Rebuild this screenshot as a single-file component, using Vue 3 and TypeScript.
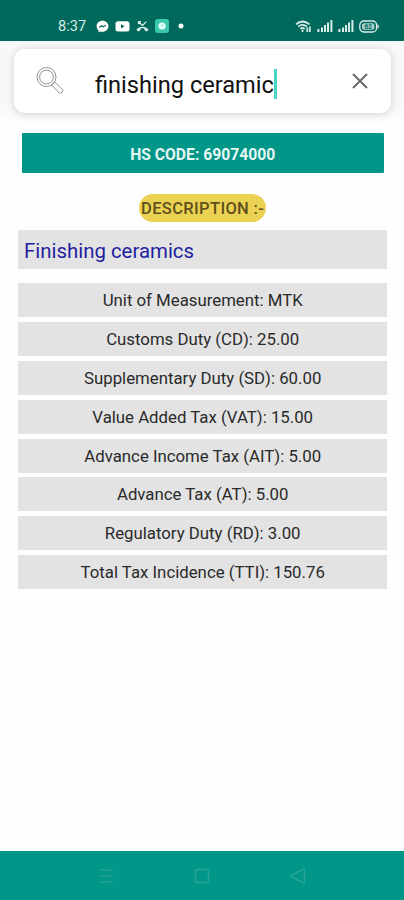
<script setup lang="ts">
import { ref } from 'vue'

interface Duty {
  label: string
  value: string
}

const query = ref<string>('finishing ceramic')
const hsCode = '69074000'
const description = 'Finishing ceramics'
const duties: Duty[] = [
  { label: 'Unit of Measurement', value: 'MTK' },
  { label: 'Customs Duty (CD)', value: '25.00' },
  { label: 'Supplementary Duty (SD)', value: '60.00' },
  { label: 'Value Added Tax (VAT)', value: '15.00' },
  { label: 'Advance Income Tax (AIT)', value: '5.00' },
  { label: 'Advance Tax (AT)', value: '5.00' },
  { label: 'Regulatory Duty (RD)', value: '3.00' },
  { label: 'Total Tax Incidence (TTI)', value: '150.76' },
]
</script>

<template>
  <div class="screen">
    <header class="status">
      <span class="clock">8:37</span>
      <div class="notices">
        <svg width="13" height="13" viewBox="0 0 13 13">
          <path d="M6.5 .7C3.100.7.6 3.100.6 6.200c0 1.800.8 3.200 2 4.200v2l1.900-1c.6.2 1.300.3 2 .3 3.400 0 5.900-2.400 5.900-5.500S9.900.7 6.500.7z" fill="#fff" />
          <path d="M3.300 7.200 5.600 5.700 7.400 6.800 9.700 5.300" fill="none" stroke="#00695c" stroke-width="1.300" />
        </svg>
        <svg width="15" height="13" viewBox="0 0 15 13">
          <rect x=".5" y="1.200" width="14" height="10.300" rx="2.500" fill="#fff" />
          <path d="M6 4.200v4.200l3.600-2.100z" fill="#00695c" />
        </svg>
        <svg width="13" height="13" viewBox="0 0 13 13">
          <path d="M2.500 1.500v2.800M2.300 1.700h2.600M2.700 2l3.800 3.500 3.800-3.800" fill="none" stroke="#e4f3f0" stroke-width="1.200" />
          <path d="M.4 9.800C3.500 5.800 9.500 5.800 12.600 9.800l-1.900 1.700-2.300-1.400V8.300H4.600v1.800l-2.300 1.400z" fill="#e4f3f0" />
        </svg>
        <svg width="14" height="14" viewBox="0 0 14 14">
          <rect width="14" height="14" rx="3" fill="#3cc8ac" />
          <circle cx="7" cy="7" r="3.600" fill="#e9fffa" />
          <circle cx="7.500" cy="6.500" r=".9" fill="#72d8c4" />
        </svg>
        <svg class="dot" width="6" height="6" viewBox="0 0 6 6"><circle cx="3" cy="3" r="2.500" fill="#fff" /></svg>
      </div>
      <div class="radios">
        <svg class="wifi" width="17" height="13" viewBox="0 0 17 13" fill="none" stroke="#d8ece8" stroke-width="1.700">
          <path d="M1 4.300Q7.500-1.300 14.500 4.300M3.200 6.600Q7.500 3.200 12 6.600M5.300 8.800q2.200-1.700 4.400 0" />
          <path d="M7.500 9.500v2.500M12.300 12V7.500M14.900 6.500V12" />
        </svg>
        <svg v-for="n in 2" :key="n" class="signal" width="16" height="12" viewBox="0 0 16 12" fill="#d8ece8">
          <rect x=".4" y="9" width="2" height="3" />
          <rect x="4" y="7.500" width="2" height="4.500" />
          <rect x="7" y="5" width="2" height="7" />
          <rect x="10" y="2.500" width="2" height="9.500" />
          <rect x="13.400" y="0" width="2" height="12" />
        </svg>
        <svg class="battery" width="20" height="13" viewBox="0 0 20 13">
          <rect x=".8" y="1" width="16.800" height="11" rx="4" fill="none" stroke="#d8ece8" stroke-width="1.300" />
          <rect x="3" y="3.200" width="12.400" height="6.600" rx="2" fill="#a5cec7" />
          <path d="M19 4.800v3.400" stroke="#d8ece8" stroke-width="1.400" />
          <text x="9.200" y="8.900" text-anchor="middle" font-size="6.500" font-weight="700" fill="#00695c">62</text>
        </svg>
      </div>
    </header>

    <section class="search-area">
      <label class="search">
        <svg class="lens" width="30" height="30" viewBox="0 0 30 30" fill="none" stroke="#858585" stroke-width=".9">
          <circle cx="11.500" cy="11" r="9.500" />
          <circle cx="11.500" cy="11" r="6.900" />
          <path d="m16.700 19 3-3 7.900 7.700q1 1-.6 2.600t-2.800.6z" />
        </svg>
        <span class="query">{{ query }}</span><i class="caret"></i>
        <svg class="clear" width="16" height="16" viewBox="0 0 16 16" fill="none" stroke="#6b6b6b" stroke-width="2">
          <path d="m1 1 14 14M15 1 1 15" />
        </svg>
      </label>
    </section>

    <main class="content">
      <div class="code">HS CODE: {{ hsCode }}</div>
      <div class="pill">DESCRIPTION :-</div>
      <div class="description">{{ description }}</div>
      <ul class="duties">
        <li v-for="duty in duties" :key="duty.label"><span>{{ duty.label }}: {{ duty.value }}</span></li>
      </ul>
    </main>

    <nav class="navbar">
      <svg width="16" height="16" viewBox="0 0 16 16"><path d="M1 2h14M1 8h14M1 14h14" /></svg>
      <svg width="16" height="16" viewBox="0 0 16 16"><rect x="1.500" y="1.500" width="13" height="13" rx="2" /></svg>
      <svg width="16" height="16" viewBox="0 0 16 16"><path d="M1.700 7.200 12.500 1.500q2-.8 2 1v11q0 1.800-2 1L1.700 8.800q-1.200-.8 0-1.600z" /></svg>
    </nav>
  </div>
</template>

<style>
body {
  background: #fff;
}
</style>

<style scoped>
.screen {
  display: flex;
  flex-direction: column;
  width: 404px;
  height: 900px;
  overflow: hidden;
  background: #fefefe;
  font-family: Roboto, "Liberation Sans", sans-serif;
  color: #2a2a2a;
}
svg {
  display: block;
  flex: none;
}
.status {
  display: flex;
  align-items: center;
  box-sizing: border-box;
  height: 41px;
  padding: 11px 25px 0 58px;
  background: #00695c;
}
.clock {
  width: 38px;
  color: #d8ece8;
  font-size: 14.500px;
  letter-spacing: 0.1px;
}
.notices {
  display: flex;
  align-items: center;
  gap: 6px;
}
.notices .dot {
  margin-left: 3px;
}
.radios {
  display: flex;
  align-items: center;
  gap: 5px;
  margin-left: auto;
}
.search-area {
  box-sizing: border-box;
  height: 83px;
  padding: 8px 13px 11px 14px;
  background: linear-gradient(#f8f8f8, #f8f8f8 80%, #fefefe);
}
.search {
  display: flex;
  align-items: center;
  box-sizing: border-box;
  height: 64px;
  padding: 0 23px 0 21px;
  border-radius: 11px;
  background: #fff;
  box-shadow: 0 1px 8px rgba(0, 0, 0, 0.17);
}
.query {
  margin: 8px 0 0 30px;
  font-size: 23.600px;
  line-height: 30px;
  color: #111;
  white-space: nowrap;
}
.caret {
  width: 3px;
  height: 30px;
  margin-top: 6px;
  background: #49d3c0;
}
.clear {
  margin-left: auto;
}
.content {
  display: flex;
  flex: 1;
  flex-direction: column;
  padding: 9.400px 17px 0 18.400px;
}
.code {
  height: 40px;
  margin: 0 3.500px;
  border-radius: 1px;
  background: #009688;
  color: #e6f7f4;
  font-size: 15.700px;
  font-weight: 700;
  line-height: 44px;
  text-align: center;
}
.pill {
  align-self: center;
  width: 127.500px;
  height: 28px;
  margin-top: 20.600px;
  border-radius: 14px;
  background: #ecd252;
  color: #5f501d;
  font-size: 16.500px;
  font-weight: 500;
  line-height: 29px;
  letter-spacing: 0.350px;
  text-align: center;
  white-space: nowrap;
}
.description {
  height: 38.500px;
  margin-top: 8.500px;
  padding-left: 5.600px;
  background: #e3e3e3;
  color: #1f1fa0;
  font-size: 20.400px;
  line-height: 43px;
}
.duties {
  display: flex;
  flex-direction: column;
  gap: 4.800px;
  margin: 14.400px 0 0;
  padding: 0;
  list-style: none;
}
.duties li {
  height: 34px;
  background: #e3e3e3;
  font-size: 16.800px;
  line-height: 35px;
  text-align: center;
}
.navbar {
  display: flex;
  justify-content: space-between;
  box-sizing: border-box;
  height: 49px;
  padding: 17px 98px 0;
  background: #009688;
}
.navbar svg {
  fill: none;
  stroke: #26a397;
  stroke-width: 1.700;
}
</style>
